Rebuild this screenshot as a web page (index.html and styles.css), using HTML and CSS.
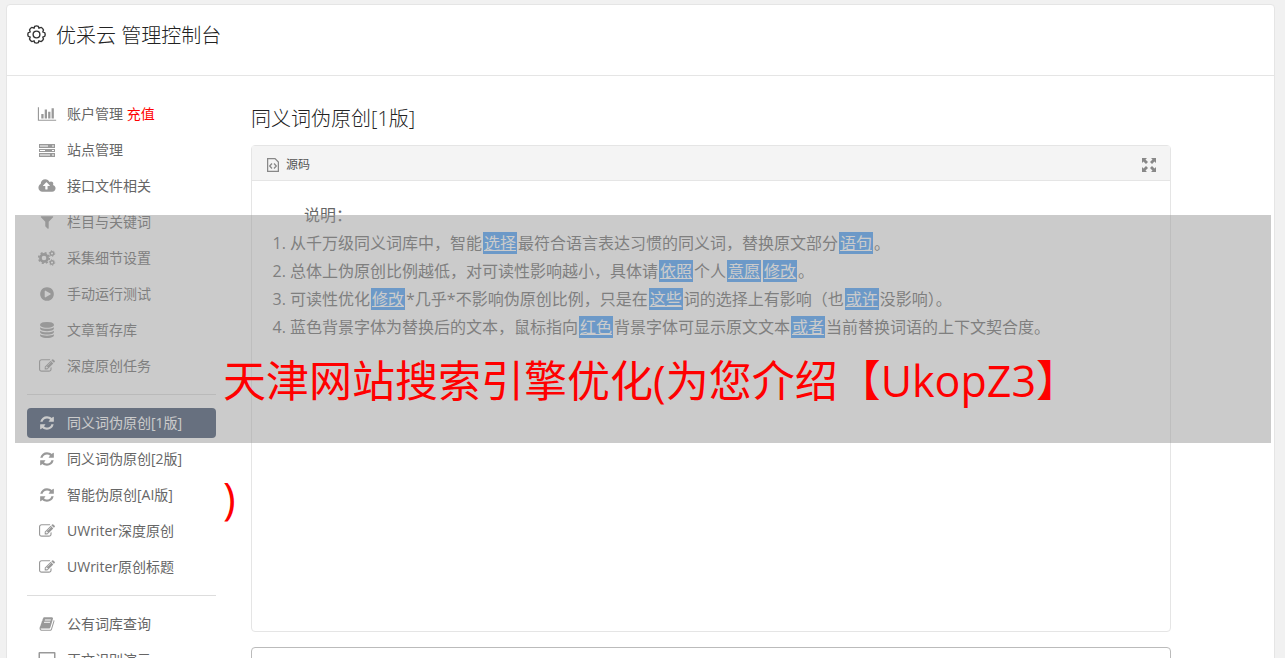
FILE: index.html
```
<!DOCTYPE html>
<html lang="zh-CN">
  <head>
    <meta charset="utf-8">
    <title>优采云 管理控制台</title>
    <link rel="stylesheet" href="styles.css">
  </head>
  <body>
    <svg class="sprite" aria-hidden="true">
      <symbol id="i-chart" viewBox="0 0 2048 1792"><path d="M640 896v512h-256v-512h256zm384-512v1024h-256v-1024h256zm1024 1152v128h-2048v-1536h128v1408h1920zm-640-896v768h-256v-768h256zm384-384v1152h-256v-1152h256z"/></symbol>
      <symbol id="i-server" viewBox="0 0 20 16"><path fill-rule="evenodd" d="M2 2h16v4H2zM3 3.500v1h8v-1zM15 3.500v1h2v-1zM2 7h16v3H2zM3 8v1h5V8zM15 8v1h2V8zM2 11h16v4H2zM3 12.500v1h10v-1zM15 12.500v1h2v-1z"/></symbol>
      <symbol id="i-cloud" viewBox="0 0 1920 1792"><path d="M1280 864q0-14-9-23l-352-352q-9-9-23-9t-23 9l-351 351q-10 12-10 24 0 14 9 23t23 9h224v352q0 13 9.500 22.500t22.500 9.500h192q13 0 22.500-9.500t9.500-22.500v-352h224q13 0 22.500-9.500t9.500-22.500zm640 288q0 159-112.500 271.500t-271.500 112.500h-1088q-185 0-316.500-131.500t-131.500-316.500q0-130 70-240t188-165q-2-30-2-43 0-212 150-362t362-150q156 0 285.500 87t188.500 231q71-62 166-62 106 0 181 75t75 181q0 76-41 138 130 31 213.500 135.500t83.500 238.500z"/></symbol>
      <symbol id="i-filter" viewBox="0 0 1792 1792"><path d="M1595 295q17 41-14 70l-493 493v742q0 42-39 59-13 5-25 5-27 0-45-19l-256-256q-19-19-19-45v-486l-493-493q-31-29-14-70 17-39 59-39h1280q42 0 59 39z"/></symbol>
      <symbol id="i-cogs" viewBox="0 0 18 16">
        <g fill="none" stroke="currentColor">
          <circle cx="6" cy="8" r="3.600" stroke-width="2.600"/>
          <circle cx="6" cy="8" r="5.300" stroke-width="1.600" stroke-dasharray="2.080 2.083"/>
          <circle cx="14" cy="3.500" r="1.800" stroke-width="1.400"/>
          <circle cx="14" cy="3.500" r="2.800" stroke-width="1" stroke-dasharray="1.200 1.732"/>
          <circle cx="14" cy="12.500" r="1.800" stroke-width="1.400"/>
          <circle cx="14" cy="12.500" r="2.800" stroke-width="1" stroke-dasharray="1.200 1.732"/>
        </g>
      </symbol>
      <symbol id="i-play" viewBox="0 0 1792 1792"><path d="M896 128q209 0 385.500 103t279.500 279.500 103 385.500-103 385.500-279.500 279.500-385.500 103-385.500-103-279.500-279.500-103-385.500 103-385.500 279.500-279.500 385.500-103zm384 823q32-18 32-55t-32-55l-544-320q-31-19-64-1-32 19-32 56v640q0 37 32 56 16 8 32 8 17 0 32-9z"/></symbol>
      <symbol id="i-database" viewBox="0 0 1792 1792"><path d="M896 768q237 0 443-43t325-127v170q0 69-103 128t-280 93.500-385 34.500-385-34.500-280-93.500-103-128v-170q119 84 325 127t443 43zm0 768q237 0 443-43t325-127v170q0 69-103 128t-280 93.500-385 34.500-385-34.500-280-93.500-103-128v-170q119 84 325 127t443 43zm0-384q237 0 443-43t325-127v170q0 69-103 128t-280 93.500-385 34.500-385-34.500-280-93.500-103-128v-170q119 84 325 127t443 43zm0-1152q208 0 385 34.500t280 93.500 103 128v128q0 69-103 128t-280 93.500-385 34.500-385-34.500-280-93.500-103-128v-128q0-69 103-128t280-93.500 385-34.500z"/></symbol>
      <symbol id="i-edit" viewBox="0 0 1792 1792"><path d="M888 1184l116-116-152-152-116 116v56h96v96h56zm440-720q-16-16-33 1l-350 350q-17 17-1 33t33-1l350-350q17-17 1-33zm80 594v190q0 119-84.500 203.500t-203.500 84.500h-832q-119 0-203.500-84.500t-84.500-203.500v-832q0-119 84.500-203.500t203.500-84.500h832q63 0 117 25 15 7 18 23 3 17-9 29l-49 49q-14 14-32 8-23-6-45-6h-832q-66 0-113 47t-47 113v832q0 66 47 113t113 47h832q66 0 113-47t47-113v-126q0-13 9-22l64-64q15-15 35-7t20 29zm-96-738l288 288-672 672h-288v-288zm444 132l-92 92-288-288 92-92q28-28 68-28t68 28l152 152q28 28 28 68t-28 68z"/></symbol>
      <symbol id="i-refresh" viewBox="0 0 1792 1792"><path d="M1639 1056q0 5-1 7-64 268-268 434.500t-478 166.500q-146 0-282.500-55t-243.500-157l-129 129q-19 19-45 19t-45-19-19-45v-448q0-26 19-45t45-19h448q26 0 45 19t19 45-19 45l-137 137q71 66 161 102t187 36q134 0 250-65t186-179q11-17 53-117 8-23 30-23h192q13 0 22.500 9.500t9.500 22.500zm25-800v448q0 26-19 45t-45 19h-448q-26 0-45-19t-19-45 19-45l138-138q-148-137-349-137-134 0-250 65t-186 179q-11 17-53 117-8 23-30 23h-199q-13 0-22.500-9.500t-9.500-22.500v-7q65-268 270-434.500t480-166.500q146 0 284 55.500t245 156.500l130-129q19-19 45-19t45 19 19 45z"/></symbol>
      <symbol id="i-book" viewBox="0 0 1792 1792"><path d="M1703 478q40 57 18 129l-275 906q-19 64-76.500 107.500t-122.500 43.500h-923q-77 0-148.500-53.500t-99.500-131.500q-24-67-2-127 0-4 3-27t4-37q1-8-3-21.500t-3-19.500q2-11 8-21t16.500-23.500 16.500-23.500q23-38 45-91.500t30-91.500q3-10 .5-30t-.5-28q3-11 17-28t17-23q21-36 42-92t25-90q1-9-2.500-32t.5-28q4-13 22-30.500t22-22.500q19-26 42.500-84.500t27.500-96.500q1-8-3-25.500t-2-26.500q2-8 9-18t18-23 17-21q8-12 16.500-30.500t15-35 16-36 19.500-32 26.500-23.500 36-11.500 47.500 5.500l-1 3q38-9 51-9h761q74 0 114 56t18 130l-274 906q-36 119-71.500 153.500t-128.500 34.500h-869q-27 0-38 15-11 16-1 43 24 70 144 70h923q29 0 56-15.500t35-41.500l300-987q7-22 5-57 38 15 59 43zm-1064 2q-4 13 2 22.500t20 9.500h608q13 0 25.500-9.500t16.500-22.500l21-64q4-13-2-22.500t-20-9.500h-608q-13 0-25.500 9.500t-16.500 22.500zm-83 256q-4 13 2 22.500t20 9.500h608q13 0 25.500-9.500t16.500-22.500l21-64q4-13-2-22.500t-20-9.500h-608q-13 0-25.500 9.500t-16.500 22.500z"/></symbol>
      <symbol id="i-desktop" viewBox="0 0 18 16"><path fill-rule="evenodd" d="M1.500 0h15q1 0 1 1v11q0 1-1 1H11l1 3H6l1-3H1.500q-1 0-1-1V1q0-1 1-1zM2 1.500V9h14V1.500z"/></symbol>
    </svg>

    <div class="console">
      <header class="console-header">
        <svg class="gear" viewBox="0 0 18 18" fill="none" stroke="currentColor" stroke-width="1.300"><path d="M7.300 1.200Q9 .4 10.700 1.200L11.300 2.900 13.300 2.300Q15 3 15.600 4.700L15 6.600 16.800 7.300Q17.600 9 16.800 10.700L15 11.400 15.600 13.300Q15 15 13.300 15.700L11.300 15.100 10.700 16.800Q9 17.600 7.300 16.800L6.700 15.100 4.700 15.700Q3 15 2.400 13.300L3 11.400 1.200 10.700Q.4 9 1.200 7.300L3 6.600 2.400 4.700Q3 3 4.700 2.300L6.700 2.900z"/><circle cx="9" cy="9" r="3.200"/></svg>
        <h1>优采云 管理控制台</h1>
      </header>

      <div class="console-body">
        <nav class="sidebar">
          <ul>
            <li><a href="#"><svg><use href="#i-chart"/></svg><span>账户管理 <em>充值</em></span></a></li>
            <li><a href="#"><svg><use href="#i-server"/></svg>站点管理</a></li>
            <li><a href="#"><svg><use href="#i-cloud"/></svg>接口文件相关</a></li>
            <li><a href="#"><svg><use href="#i-filter"/></svg>栏目与关键词</a></li>
            <li><a href="#"><svg><use href="#i-cogs"/></svg>采集细节设置</a></li>
            <li><a href="#"><svg><use href="#i-play"/></svg>手动运行测试</a></li>
            <li><a href="#"><svg><use href="#i-database"/></svg>文章暂存库</a></li>
            <li><a href="#"><svg><use href="#i-edit"/></svg>深度原创任务</a></li>
          </ul>
          <ul>
            <li><a href="#" class="active"><svg><use href="#i-refresh"/></svg>同义词伪原创[1版]</a></li>
            <li><a href="#"><svg><use href="#i-refresh"/></svg>同义词伪原创[2版]</a></li>
            <li><a href="#"><svg><use href="#i-refresh"/></svg>智能伪原创[AI版]</a></li>
            <li><a href="#"><svg><use href="#i-edit"/></svg>UWriter深度原创</a></li>
            <li><a href="#"><svg><use href="#i-edit"/></svg>UWriter原创标题</a></li>
          </ul>
          <ul>
            <li><a href="#"><svg><use href="#i-book"/></svg>公有词库查询</a></li>
            <li><a href="#"><svg><use href="#i-desktop"/></svg>正文识别演示</a></li>
          </ul>
        </nav>

        <main>
          <h2>同义词伪原创[1版]</h2>
          <section class="editor">
            <div class="toolbar">
              <button type="button"><svg class="source" viewBox="0 0 12 14" fill="none" stroke="currentColor"><path stroke-width="1.300" d="M.6.6h7.400l3.400 3.400v9.400H.6zM5 5.500L2.700 8 5 10.500M7 5.500L9.300 8 7 10.500"/></svg>源码</button>
              <button type="button" aria-label="全屏"><svg class="expand" viewBox="0 0 14 14"><path d="M0 0h5L3.500 1.500 6 4 4 6 1.500 3.500 0 5zM14 0v5l-1.500-1.500L10 6 8 4l2.500-2.500L9 0zM0 14V9l1.500 1.500L4 8l2 2-2.500 2.500L5 14zM14 14H9l1.500-1.500L8 10l2-2 2.500 2.500L14 9z"/></svg></button>
            </div>
            <div class="content">
              <p>说明：</p>
              <ol>
                <li>从千万级同义词库中，智能<mark>选择</mark>最符合语言表达习惯的同义词，替换原文部分<mark>语句</mark>。</li>
                <li>总体上伪原创比例越低，对可读性影响越小，具体请<mark>依照</mark>个人<mark>意愿</mark><mark>修改</mark>。</li>
                <li>可读性优化<mark>修改</mark>*几乎*不影响伪原创比例，只是在<mark>这些</mark>词的选择上有影响（也<mark>或许</mark>没影响）。</li>
                <li>蓝色背景字体为替换后的文本，鼠标指向<mark>红色</mark>背景字体可显示原文文本<mark>或者</mark>当前替换词语的上下文契合度。</li>
              </ol>
            </div>
          </section>
          <section class="result"></section>
        </main>
      </div>
    </div>

    <div class="banner">
      <p>天津网站搜索引擎优化(为您介绍【UkopZ3】<br>)</p>
    </div>
  </body>
</html>
```

FILE: styles.css
```
* { box-sizing: border-box; }
html { height: 100%; overflow: hidden; background: #f1f1f1; }
body { margin: 0; color: #666; font: 400 14px/30px "Open Sans", "Noto Sans CJK SC", sans-serif; }
h1, h2, p, ul, ol { margin: 0; padding: 0; }
h1, h2 { color: #222; font-size: 20px; font-weight: 300; }
svg { fill: currentColor; }
.sprite { display: none; }

.console { margin: 4px 10px 0 6px; min-height: 100vh; background: #fff; border: 1px solid #e5e5e5; border-radius: 4px; }
.console-header { display: flex; align-items: flex-start; gap: 10px; height: 71px; padding: 16px 20px 0; border-bottom: 1px solid #e5e5e5; color: #333; }
.gear { width: 19px; height: 19px; margin-top: 4px; fill: none; }
.console-body { display: flex; gap: 35px; padding: 23px 103px 0 20px; }

.sidebar { flex: 0 0 189px; }
.sidebar ul { display: grid; gap: 6px; list-style: none; }
.sidebar ul + ul { margin-top: 13px; padding-top: 13px; border-top: 1px solid #ddd; }
.sidebar a { display: flex; align-items: center; gap: 10px; height: 30px; padding-left: 10px; border-radius: 4px; color: #666; text-decoration: none; }
.sidebar svg { width: 20px; height: 16px; color: #999; }
.sidebar em { color: #f00; font-style: normal; }
.sidebar .active, .sidebar .active svg { color: #fff; }
.sidebar .active { background: #364967; }

main { flex: 1; min-width: 0; }
main h2 { margin: 5px 0 11px; }
.editor { min-height: 487px; border: 1px solid #e5e5e5; border-radius: 4px; }
.toolbar { display: flex; justify-content: space-between; height: 35px; padding: 3px 14px 0 15px; background: #f4f4f4; border-bottom: 1px solid #e5e5e5; }
.toolbar button { display: flex; align-items: center; gap: 7px; padding: 0; background: none; border: 0; color: #555; font: inherit; font-size: 12px; }
.toolbar svg { color: #888; }
.source { width: 12px; height: 14px; fill: none; }
.expand { width: 14px; height: 14px; }
.content { padding: 20px; font-size: 16px; line-height: 28px; }
.content p { text-indent: 32px; }
.content ol { padding-left: 18px; }
.content mark { margin: 0 1px; padding: 0 1px; background: #409bf9; color: #fff; text-decoration: underline; }
.result { height: 80px; margin-top: 15px; border: 1px solid #bbb; border-radius: 4px; }

/* translucent strip over the console */
.banner { position: absolute; top: 215px; left: 15px; right: 14px; height: 228px; padding: 107px 0 0 208px; background: rgba(151, 151, 151, .5); color: #f00; font-size: 43px; line-height: 117px; white-space: nowrap; }
```
